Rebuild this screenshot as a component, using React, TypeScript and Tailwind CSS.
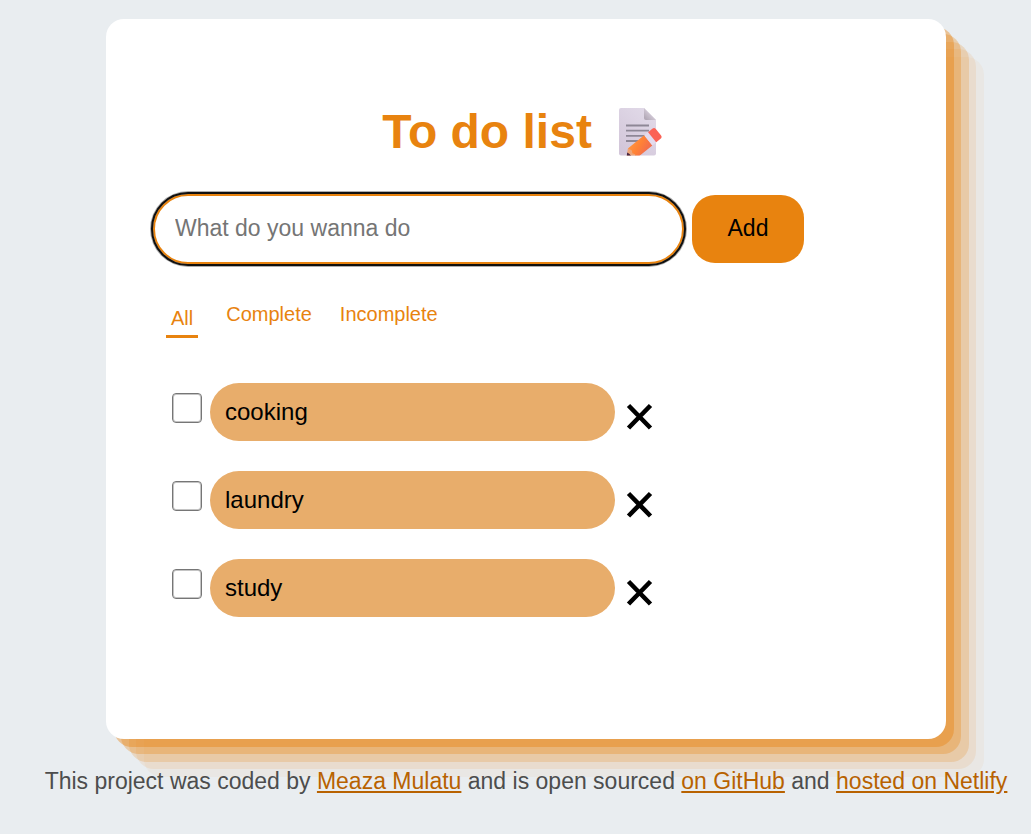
import { useState, type FormEvent } from "react";

type Task = { id: number; text: string; done: boolean };
type Filter = "All" | "Complete" | "Incomplete";

const FILTERS: Filter[] = ["All", "Complete", "Incomplete"];

function MemoIcon() {
  return (
    <svg viewBox="0 0 44 50" className="h-[50px] w-11" role="img" aria-label="memo">
      <defs>
        <linearGradient id="paper" x1="1" y1="0" x2="0.3" y2="1">
          <stop offset="0" stopColor="#e3dcea" />
          <stop offset="1" stopColor="#d3c7da" />
        </linearGradient>
        <linearGradient id="fold" x1="1" y1="0" x2="0" y2="1">
          <stop offset="0.45" stopColor="#d2c9d6" />
          <stop offset="1" stopColor="#aaa0ae" />
        </linearGradient>
        <linearGradient id="pencil" x1="0" y1="0" x2="0.6" y2="1">
          <stop offset="0" stopColor="#ff9440" />
          <stop offset="0.5" stopColor="#ff8236" />
          <stop offset="1" stopColor="#f4704a" />
        </linearGradient>
        <clipPath id="page-edge">
          <path d="M0 0H44V48.5H0Z" />
        </clipPath>
      </defs>
      <path d="M3 1H26L38 13V46.5Q38 48.5 36 48.5H3Q1 48.5 1 46.5V3Q1 1 3 1Z" fill="url(#paper)" />
      <path d="M26 1L38 13H28Q26 13 26 11Z" fill="url(#fold)" />
      <path d="M8 18.5H31M8 23.7H31M8 28.8H27M8 34H21" stroke="#8e8796" strokeWidth="1.8" />
      <g clipPath="url(#page-edge)">
        <g transform="translate(8.5 51) rotate(-39)">
          <path d="M0 0L7 -6.5L12 0L7 6.5Z" fill="#eda477" />
          <path d="M0 0L4 -3.8Q6 0 4 3.8Z" fill="#482641" />
          <path d="M7 -6.5H28V6.5H7L9 2.5L7.5 0L9 -2.5Z" fill="url(#pencil)" />
          <path d="M28 -6.5H33V6.5H28Z" fill="#e4dbed" />
          <path d="M33 -6.5H38.5Q41 -6.5 41 -4V4Q41 6.5 38.5 6.5H33Z" fill="#fb6255" />
        </g>
      </g>
    </svg>
  );
}

export default function App() {
  const [tasks, setTasks] = useState<Task[]>([
    { id: 1, text: "cooking", done: false },
    { id: 2, text: "laundry", done: false },
    { id: 3, text: "study", done: false },
  ]);
  const [filter, setFilter] = useState<Filter>("All");
  const [draft, setDraft] = useState("");

  const addTask = (event: FormEvent) => {
    event.preventDefault();
    const text = draft.trim();
    if (!text) return;
    setTasks([...tasks, { id: Date.now(), text, done: false }]);
    setDraft("");
  };

  const visible = tasks.filter(
    (task) => filter === "All" || task.done === (filter === "Complete"),
  );

  return (
    <div className="flex min-h-screen flex-col items-center bg-[#e9edf0] pt-[19px] pl-[21px] font-['Liberation_Sans',Arial,sans-serif]">
      <main className="w-full max-w-[840px] rounded-[18px] bg-white px-[47px] pt-[85px] pb-[122px] shadow-[8px_8px_rgba(232,131,15,0.4),15px_15px_rgba(232,131,15,0.3),23px_23px_rgba(232,131,15,0.2),30px_30px_rgba(232,131,15,0.1),38px_38px_rgba(232,131,15,0.05)]">
        <h1 className="flex items-center justify-center gap-[26px] pr-2 text-[48px] leading-[56px] font-bold text-[#e8830f]">
          To do list
          <MemoIcon />
        </h1>

        <form onSubmit={addTask} className="mt-[34px] flex items-center gap-2">
          <input
            type="text"
            aria-label="New task"
            placeholder="What do you wanna do"
            value={draft}
            onChange={(event) => setDraft(event.target.value)}
            className="h-[70px] w-[531px] min-w-0 rounded-full border-2 border-[#e8830f] bg-white px-5 pb-0.5 text-[23px] text-black shadow-[0_0_0_3px_rgba(16,16,16,0.35)] outline-2 outline-[#101010] placeholder:text-[#757575]"
          />
          <button
            type="submit"
            className="h-[68px] w-28 shrink-0 rounded-[23px] bg-[#e8830f] pb-0.5 text-[23px] text-black"
          >
            Add
          </button>
        </form>

        <nav aria-label="Filter tasks" className="mt-[39px] ml-[13px] flex h-[35px] items-start gap-7">
          {FILTERS.map((name) => (
            <button
              key={name}
              type="button"
              aria-pressed={filter === name}
              onClick={() => setFilter(name)}
              className={
                filter === name
                  ? "border-b-3 border-[#e8830f] px-[5px] pt-1 pb-[5px] text-[20px] leading-[23px] text-[#e8830f]"
                  : "text-[20px] leading-[23px] text-[#e8830f]"
              }
            >
              {name}
            </button>
          ))}
        </nav>

        <ul className="mt-[45px] ml-[19px] flex flex-col gap-[30px]">
          {visible.map((task) => (
            <li key={task.id} className="flex items-start">
              <input
                id={`task-${task.id}`}
                type="checkbox"
                checked={task.done}
                onChange={() =>
                  setTasks(tasks.map((t) => (t.id === task.id ? { ...t, done: !t.done } : t)))
                }
                className="mt-2.5 mr-2 size-[30px] shrink-0 appearance-none rounded-[4px] border border-[#767676] bg-white shadow-[inset_0_0_0_1px_#c4c4c4] checked:bg-[#e8830f]"
              />
              <label
                htmlFor={`task-${task.id}`}
                className="w-[405px] rounded-full bg-[#e8ad6b] px-[15px] py-[15px] text-[24px] leading-7 text-black"
              >
                {task.text}
              </label>
              <button
                type="button"
                aria-label={`Delete ${task.text}`}
                onClick={() => setTasks(tasks.filter((t) => t.id !== task.id))}
                className="mt-5 ml-[11px] shrink-0"
              >
                <svg viewBox="0 0 27 27" className="size-[27px]" aria-hidden="true">
                  <path d="M2.5 2.5L24.5 25M24.5 2.5L2.5 25" stroke="#000" strokeWidth="4.6" />
                </svg>
              </button>
            </li>
          ))}
        </ul>
      </main>

      <footer className="py-7 text-center text-[23px] leading-7 text-[#4d4d4d]">
        This project was coded by{" "}
        <a href="#author" className="text-[#b86200] underline">Meaza Mulatu</a> and is open sourced{" "}
        <a href="#github" className="text-[#b86200] underline">on GitHub</a> and{" "}
        <a href="#netlify" className="text-[#b86200] underline">hosted on Netlify</a>
      </footer>
    </div>
  );
}
